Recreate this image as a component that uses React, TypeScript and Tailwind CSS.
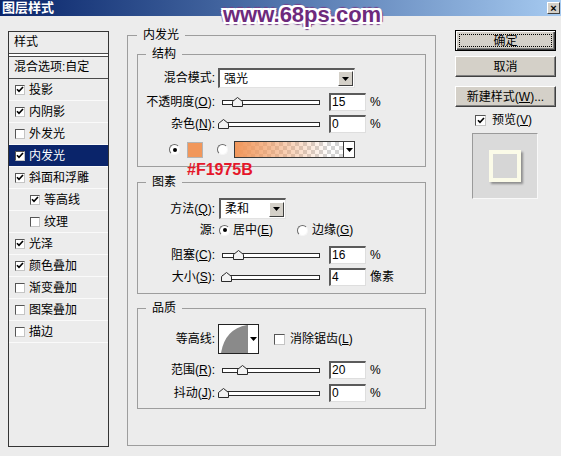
import React from 'react';

// 图层样式 > 内发光 对话框

const leftItems = [
  { label: '投影', on: true },
  { label: '内阴影', on: true },
  { label: '外发光', on: false },
  { label: '内发光', on: true, active: true },
  { label: '斜面和浮雕', on: true },
  { label: '等高线', on: true, indent: true },
  { label: '纹理', on: false, indent: true },
  { label: '光泽', on: true },
  { label: '颜色叠加', on: true },
  { label: '渐变叠加', on: false },
  { label: '图案叠加', on: false },
  { label: '描边', on: false },
];

function Check({ on, small }: { on?: boolean; small?: boolean }) {
  return (
    <span
      className={`inline-flex shrink-0 items-center justify-center bg-white border border-t-[#555] border-l-[#555] border-r-[#c4c4c4] border-b-[#c4c4c4] ${
        small ? 'w-[10px] h-[10px]' : 'w-[11px] h-[11px]'
      }`}
    >
      {on && (
        <svg width="8" height="7" viewBox="0 0 8 7">
          <path d="M1 3.2 L3 5.4 L7 1" fill="none" stroke="#000" strokeWidth="1.6" />
        </svg>
      )}
    </span>
  );
}

function Radio({ on }: { on?: boolean }) {
  return (
    <span className="inline-flex w-[11px] h-[11px] shrink-0 items-center justify-center rounded-full bg-white border border-t-[#6a6a6a] border-l-[#6a6a6a] border-r-[#f6f6f6] border-b-[#f6f6f6]">
      {on && <span className="w-[4px] h-[4px] rounded-full bg-black" />}
    </span>
  );
}

function Arrow() {
  return (
    <svg width="7" height="4" viewBox="0 0 7 4">
      <path d="M0 0H7L3.5 4Z" fill="#000" />
    </svg>
  );
}

function Lbl({ t, k }: { t: string; k?: string }) {
  return (
    <span className="w-[77px] shrink-0 whitespace-nowrap text-right">
      {t}
      {k && (
        <>
          (<u>{k}</u>)
        </>
      )}
      :
    </span>
  );
}

function Select({ value, w }: { value: string; w: string }) {
  return (
    <div
      className={`flex items-center ${w} h-full bg-white border-t-2 border-l-2 border-r border-b border-t-[#5b5b5b] border-l-[#5b5b5b] border-r-[#e2e2e2] border-b-[#e2e2e2] pl-[4px]`}
    >
      <span className="flex-1">{value}</span>
      <span className="w-[15px] h-[15px] mr-[1px] flex items-center justify-center bg-[#d4d0c8] border border-t-white border-l-white border-r-[#404040] border-b-[#404040]">
        <Arrow />
      </span>
    </div>
  );
}

function Slider({ v }: { v: number }) {
  // 拇指中心: 5px + v% * 95px
  const left = 5 + (v / 100) * 95 - 5.5;
  return (
    <div className="relative w-[104px] h-[18px] flex items-center">
      <div className="ml-[4px] w-[98px] h-[5px] border border-[#2a2a2a] bg-white" />
      <svg className="absolute top-[4px]" style={{ left }} width="11" height="10" viewBox="0 0 11 10">
        <path d="M0.5 9.5V4.5L5.5 0.5L10.5 4.5V9.5Z" fill="#f2f2f2" stroke="#2a2a2a" />
      </svg>
    </div>
  );
}

function NumBox({ v }: { v: number }) {
  return (
    <div className="ml-[7px] w-[37px] h-[18px] bg-white border-t-2 border-l-2 border-r border-b border-t-[#5b5b5b] border-l-[#5b5b5b] border-r-[#dedede] border-b-[#dedede] pl-[1px] leading-[15px]">
      {v}
    </div>
  );
}

function SliderRow({
  t,
  k,
  v,
  unit = '%',
  className = '',
}: {
  t: string;
  k: string;
  v: number;
  unit?: string;
  className?: string;
}) {
  return (
    <div className={`flex items-center h-[18px] ${className}`}>
      <Lbl t={t} k={k} />
      <div className="ml-[3px]">
        <Slider v={v} />
      </div>
      <NumBox v={v} />
      <span className="ml-[4px]">{unit}</span>
    </div>
  );
}

function Btn({ children, def }: { children: React.ReactNode; def?: boolean }) {
  if (def) {
    return (
      <div className="h-[21px] border border-black bg-[#d4d0c8] shadow-[inset_1px_1px_0_#fff,inset_-1px_-1px_0_#404040,inset_-2px_-2px_0_#808080] p-[3px]">
        <div className="w-full h-full border border-dotted border-black flex items-center justify-center">
          {children}
        </div>
      </div>
    );
  }
  return (
    <div className="h-[21px] bg-[#d4d0c8] border border-t-white border-l-white border-r-[#404040] border-b-[#404040] shadow-[inset_-1px_-1px_0_#808080] flex items-center justify-center">
      {children}
    </div>
  );
}

export default function App() {
  return (
    <div className="relative w-[561px] h-[456px] overflow-hidden bg-[#ececec] text-[12px] leading-[14px] text-black font-['Liberation_Sans','Noto_Sans_CJK_SC',sans-serif]">
      {/* タイトルバー */}
      <div className="h-[16px] flex items-center bg-linear-to-r from-[#0a246a] to-[#a6caf0] pl-[2px] pr-[1px]">
        <span className="text-white font-bold text-[13px] leading-[16px]">图层样式</span>
        <span className="ml-auto w-[13px] h-[12px] bg-[#d4d0c8] border border-t-white border-l-white border-r-[#404040] border-b-[#404040] flex items-center justify-center text-[11px] leading-[10px] font-bold">
          ×
        </span>
      </div>

      <div className="flex items-start pt-[12px]">
        {/* 样式リスト */}
        <div className="mt-[3px] ml-[8px] w-[101px] h-[416px] shrink-0 border border-[#353535]">
          <div className="h-[21px] pl-[5px] leading-[21px]">样式</div>
          <div className="h-[4px] border-y border-[#4a4a4a] bg-white" />
          <div className="h-[22px] pl-[5px] leading-[21px] border-b border-[#4a4a4a]">混合选项:自定</div>
          {leftItems.map((it) => (
            <div
              key={it.label}
              className={`h-[22px] flex items-center border-b border-[#fafafa] ${
                it.active ? 'bg-[#0a246a] text-white' : ''
              } ${it.indent ? 'pl-[21px]' : 'pl-[6px]'}`}
            >
              <Check on={it.on} small />
              <span className="ml-[4px]">{it.label}</span>
            </div>
          ))}
        </div>

        {/* 内发光 */}
        <fieldset className="ml-[18px] w-[309px] h-[418px] shrink-0 border border-[#9d9d9d]">
          <legend className="ml-[9px] px-[6px] leading-[14px]">内发光</legend>
          <div className="flex flex-col pt-[5px] px-[9px]">
            <fieldset className="border border-[#9d9d9d]">
              <legend className="ml-[8px] px-[6px] leading-[14px]">结构</legend>
              <div className="flex flex-col pt-[7px] pb-[8px]">
                <div className="flex items-center h-[20px]">
                  <span className="w-[77px] shrink-0 text-right">混合模式:</span>
                  <div className="ml-[3px] h-full">
                    <Select value="强光" w="w-[137px]" />
                  </div>
                </div>
                <SliderRow t="不透明度" k="O" v={15} className="mt-[5px]" />
                <SliderRow t="杂色" k="N" v={0} className="mt-[4px]" />
                <div className="flex items-center h-[17px] mt-[8px] pl-[31px]">
                  <Radio on />
                  <span className="ml-[7px] w-[16px] h-[16px] bg-[#f1975b] border border-[#b4b4b4]" />
                  <span className="ml-[14px] flex">
                    <Radio />
                  </span>
                  <div className="ml-[6px] w-[121px] h-[17px] flex border border-[#3a3a3a]">
                    <div className="flex-1 [background:linear-gradient(90deg,#f1975b,rgba(241,151,91,0)_88%),repeating-conic-gradient(#d4d4d4_0_25%,#ffffff_0_50%)_0_0/8px_8px]" />
                    <div className="w-[11px] border-l border-[#3a3a3a] bg-white flex items-center justify-center">
                      <Arrow />
                    </div>
                  </div>
                </div>
              </div>
            </fieldset>

            <fieldset className="mt-[8px] border border-[#9d9d9d]">
              <legend className="ml-[8px] px-[6px] leading-[14px]">图素</legend>
              <div className="flex flex-col pt-[9px] pb-[7px]">
                <div className="flex items-center h-[21px]">
                  <Lbl t="方法" k="Q" />
                  <div className="ml-[4px] h-full">
                    <Select value="柔和" w="w-[67px]" />
                  </div>
                </div>
                <div className="flex items-center h-[14px] mt-[4px]">
                  <span className="w-[77px] shrink-0 text-right">源:</span>
                  <span className="ml-[4px] flex">
                    <Radio on />
                  </span>
                  <span className="ml-[3px]">
                    居中(<u>E</u>)
                  </span>
                  <span className="ml-[24px] flex">
                    <Radio />
                  </span>
                  <span className="ml-[4px]">
                    边缘(<u>G</u>)
                  </span>
                </div>
                <SliderRow t="阻塞" k="C" v={16} className="mt-[9px]" />
                <SliderRow t="大小" k="S" v={4} unit="像素" className="mt-[4px]" />
              </div>
            </fieldset>

            <fieldset className="mt-[7px] border border-[#9d9d9d]">
              <legend className="ml-[8px] px-[6px] leading-[14px]">品质</legend>
              <div className="flex flex-col pt-[9px] pb-[6px]">
                <div className="flex items-center h-[30px]">
                  <span className="w-[77px] shrink-0 text-right">等高线:</span>
                  <div className="ml-[3px] w-[41px] h-[30px] flex border border-[#222] bg-white">
                    <svg width="30" height="28" viewBox="0 0 30 28">
                      <path d="M2 28 Q6 4 28 0 L29 0 L29 28 Z" fill="#8a8a8a" />
                    </svg>
                    <div className="flex-1 flex items-center justify-center">
                      <Arrow />
                    </div>
                  </div>
                  <span className="ml-[15px] flex">
                    <Check />
                  </span>
                  <span className="ml-[5px]">
                    消除锯齿(<u>L</u>)
                  </span>
                </div>
                <SliderRow t="范围" k="R" v={20} className="mt-[7px]" />
                <SliderRow t="抖动" k="J" v={0} className="mt-[5px]" />
              </div>
            </fieldset>
          </div>
        </fieldset>

        {/* 右ボタン */}
        <div className="ml-[19px] mt-[2px] w-[101px] shrink-0 flex flex-col">
          <Btn def>确定</Btn>
          <div className="mt-[5px]">
            <Btn>取消</Btn>
          </div>
          <div className="mt-[9px]">
            <Btn>
              新建样式(<u>W</u>)...
            </Btn>
          </div>
          <div className="mt-[6px] ml-[20px] flex items-center h-[14px]">
            <Check on />
            <span className="ml-[6px]">
              预览(<u>V</u>)
            </span>
          </div>
          <div className="mt-[6px] ml-[17px] w-[66px] h-[66px] border border-t-[#9a9a9a] border-l-[#9a9a9a] border-r-[#f8f8f8] border-b-[#f8f8f8] bg-[#dadada] flex items-center justify-center">
            <div className="w-[32px] h-[32px] border-[4px] border-[#fbfbe8] bg-[#d6d6d6] shadow-[2px_2px_2px_rgba(0,0,0,0.35)]" />
          </div>
        </div>
      </div>

      {/* 注記 */}
      <div className="absolute left-[187px] top-[161px] text-[16px] leading-[18px] font-bold text-[#e5172a] font-['Liberation_Sans',sans-serif]">
        #F1975B
      </div>

      {/* 透かし */}
      <div className="absolute left-[223px] top-[2px] text-[22px] leading-[26px] font-bold text-[#6d2a7c] font-['Liberation_Sans',sans-serif] [text-shadow:2px_0_0_#fff,-2px_0_0_#fff,0_2px_0_#fff,0_-2px_0_#fff,2px_2px_0_#fff,-2px_-2px_0_#fff,2px_-2px_0_#fff,-2px_2px_0_#fff,3px_0_1px_#7a3f88,-3px_0_1px_#7a3f88,0_3px_1px_#7a3f88,0_-3px_1px_#7a3f88]">
        www.68ps.com
      </div>
    </div>
  );
}
